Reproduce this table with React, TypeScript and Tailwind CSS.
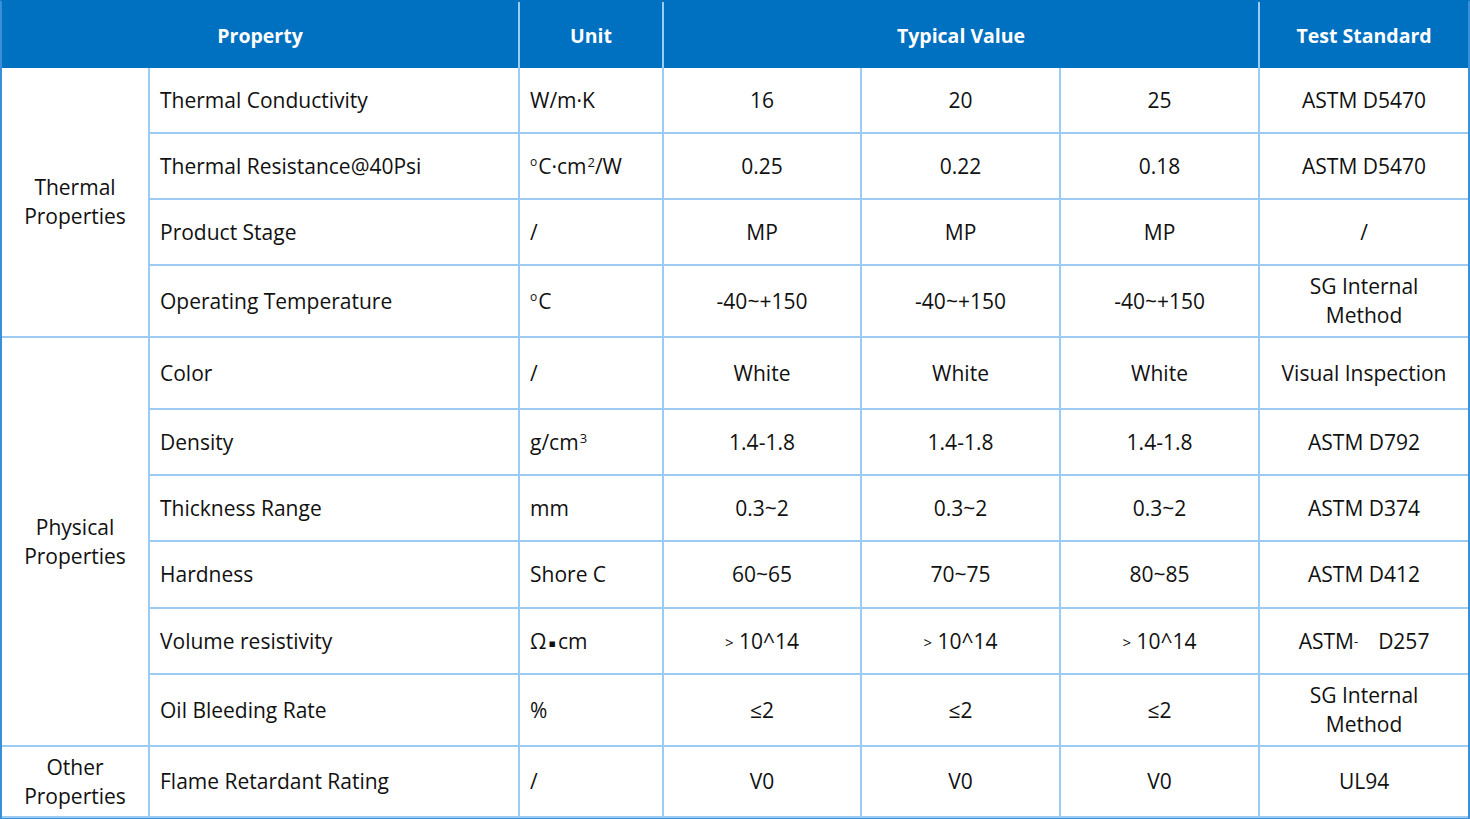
import React from 'react';

// Spec sheet table – thermal pad properties

type Row = {
  name: string;
  unit: React.ReactNode;
  values: React.ReactNode[];
  standard: React.ReactNode;
  h: string;
};

const font = { fontFamily: '"Open Sans", "Noto Sans", "DejaVu Sans", sans-serif' };

const cell = 'border-r-2 border-b-2 border-[#9ccbf3] align-middle';

const Deg = () => <span className="text-[12px] leading-none relative -top-[8px] mr-[1px]">o</span>;
const Sup = ({ c }: { c: string }) => (
  <span className="text-[13px] leading-none relative -top-[7px] ml-[1px]">{c}</span>
);

const Gt = ({ v }: { v: string }) => (
  <span>
    <span className="text-[15px] leading-none relative -top-[1px]">&gt;</span> {v}
  </span>
);

const twoLine = (a: string, b: string) => (
  <span>
    {a}
    <br />
    {b}
  </span>
);

const thermal: Row[] = [
  { name: 'Thermal Conductivity', unit: 'W/m·K', values: ['16', '20', '25'], standard: 'ASTM D5470', h: 'h-[66px]' },
  {
    name: 'Thermal Resistance@40Psi',
    unit: (
      <span>
        <Deg />C·cm<Sup c="2" />/W
      </span>
    ),
    values: ['0.25', '0.22', '0.18'],
    standard: 'ASTM D5470',
    h: 'h-[66px]',
  },
  { name: 'Product Stage', unit: '/', values: ['MP', 'MP', 'MP'], standard: '/', h: 'h-[66px]' },
  {
    name: 'Operating Temperature',
    unit: (
      <span>
        <Deg />C
      </span>
    ),
    values: ['-40~+150', '-40~+150', '-40~+150'],
    standard: twoLine('SG Internal', 'Method'),
    h: 'h-[72px]',
  },
];

const physical: Row[] = [
  { name: 'Color', unit: '/', values: ['White', 'White', 'White'], standard: 'Visual Inspection', h: 'h-[72px]' },
  {
    name: 'Density',
    unit: (
      <span>
        g/cm<Sup c="3" />
      </span>
    ),
    values: ['1.4-1.8', '1.4-1.8', '1.4-1.8'],
    standard: 'ASTM D792',
    h: 'h-[66px]',
  },
  { name: 'Thickness Range', unit: 'mm', values: ['0.3~2', '0.3~2', '0.3~2'], standard: 'ASTM D374', h: 'h-[66px]' },
  { name: 'Hardness', unit: 'Shore C', values: ['60~65', '70~75', '80~85'], standard: 'ASTM D412', h: 'h-[67px]' },
  {
    name: 'Volume resistivity',
    unit: (
      <span>
        Ω<span className="text-[11px] leading-none relative -top-[2px] mx-[2px]">▪</span>cm
      </span>
    ),
    values: [<Gt key="a" v="10^14" />, <Gt key="b" v="10^14" />, <Gt key="c" v="10^14" />],
    standard: (
      <span>
        ASTM<span className="text-[13px] leading-none relative -top-[3px]">-</span>
        <span className="inline-block w-[20px]" />
        D257
      </span>
    ),
    h: 'h-[66px]',
  },
  {
    name: 'Oil Bleeding Rate',
    unit: '%',
    values: ['≤2', '≤2', '≤2'],
    standard: twoLine('SG Internal', 'Method'),
    h: 'h-[72px]',
  },
];

function Group({ label, rows, last }: { label: React.ReactNode; rows: Row[]; last?: boolean }) {
  return (
    <>
      {rows.map((r, i) => {
        const b = last && i === rows.length - 1 ? 'border-b-0' : '';
        return (
          <tr key={r.name} className={r.h}>
            {i === 0 && (
              <td rowSpan={rows.length} className={`${cell} text-center ${last ? 'border-b-0' : ''}`}>
                {label}
              </td>
            )}
            <td className={`${cell} ${b} pl-[10px]`}>{r.name}</td>
            <td className={`${cell} ${b} pl-[10px]`}>{r.unit}</td>
            {r.values.map((v, j) => (
              <td key={j} className={`${cell} ${b} text-center`}>
                {v}
              </td>
            ))}
            <td className={`border-b-2 border-[#9ccbf3] ${b} text-center align-middle`}>{r.standard}</td>
          </tr>
        );
      })}
    </>
  );
}

export default function App() {
  return (
    <div className="w-[1470px] h-[819px] bg-white overflow-hidden" style={font}>
      <div className="border-2 border-[#3b8fd8] border-t-[#0070c0] w-[1470px]">
        <table className="table-fixed border-separate border-spacing-0 w-[1466px] text-[21px] leading-[29px] text-[#111]">
          <colgroup>
            <col className="w-[148px]" />
            <col className="w-[370px]" />
            <col className="w-[144px]" />
            <col className="w-[198px]" />
            <col className="w-[199px]" />
            <col className="w-[199px]" />
            <col className="w-[208px]" />
          </colgroup>
          <thead>
            <tr className="h-[66px] bg-[#0070c0] text-white font-bold text-[19.5px]">
              <th colSpan={2} className="border-r-2 border-[#9ccbf3] text-center align-middle">
                Property
              </th>
              <th className="border-r-2 border-[#9ccbf3] text-center align-middle">Unit</th>
              <th colSpan={3} className="border-r-2 border-[#9ccbf3] text-center align-middle">
                Typical Value
              </th>
              <th className="text-center align-middle">Test Standard</th>
            </tr>
          </thead>
          <tbody>
            <Group label={twoLine('Thermal', 'Properties')} rows={thermal} />
            <Group label={twoLine('Physical', 'Properties')} rows={physical} />
            <Group
              label={twoLine('Other', 'Properties')}
              rows={[
                {
                  name: 'Flame Retardant Rating',
                  unit: '/',
                  values: ['V0', 'V0', 'V0'],
                  standard: 'UL94',
                  h: 'h-[71px]',
                },
              ]}
              last
            />
          </tbody>
        </table>
      </div>
    </div>
  );
}
